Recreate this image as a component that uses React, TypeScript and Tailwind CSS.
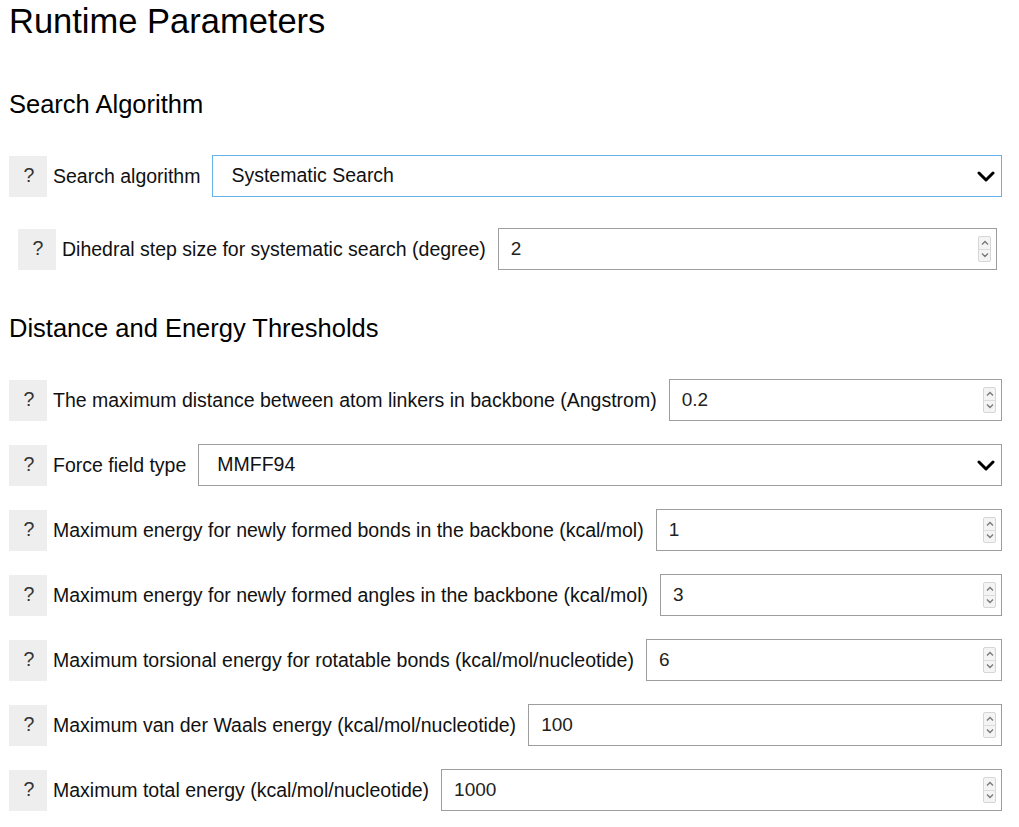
import React from "react";

const font = { fontFamily: '"Liberation Sans", Arial, sans-serif' };

function Help() {
  return (
    <div className="flex h-[41px] w-[38px] shrink-0 items-center justify-center bg-[#eeeeee] pl-[2px] text-[19.5px] text-[#333]">
      ?
    </div>
  );
}

function Chevron() {
  return (
    <svg width="18" height="11" viewBox="0 0 18 11" className="shrink-0">
      <path d="M2 2 L9 9 L16 2" fill="none" stroke="#000" strokeWidth="3" strokeLinecap="round" strokeLinejoin="round" />
    </svg>
  );
}

function Spinner() {
  return (
    <div className="flex h-[26px] w-[13px] shrink-0 flex-col rounded-[2px] border border-[#d6d6d6] bg-[#f4f4f4]">
      <div className="flex flex-1 items-center justify-center border-b border-[#dcdcdc]">
        <svg width="8" height="6" viewBox="0 0 8 6">
          <path d="M1 4.5 L4 1.5 L7 4.5" fill="none" stroke="#7a7a7a" strokeWidth="1.4" />
        </svg>
      </div>
      <div className="flex flex-1 items-center justify-center">
        <svg width="8" height="6" viewBox="0 0 8 6">
          <path d="M1 1.5 L4 4.5 L7 1.5" fill="none" stroke="#7a7a7a" strokeWidth="1.4" />
        </svg>
      </div>
    </div>
  );
}

function NumberRow({ label, value }: { label: string; value: string }) {
  return (
    <div className="flex h-[42px] items-center">
      <Help />
      <div className="ml-[6px] mr-[12px] whitespace-nowrap text-[19.5px] leading-[22px] text-[#111]">{label}</div>
      <div className="flex h-[42px] flex-1 items-center border border-[#9d9d9d] bg-white pl-[12px] pr-[5px]">
        <span className="flex-1 text-[19px] text-[#222]">{value}</span>
        <Spinner />
      </div>
    </div>
  );
}

function SelectRow({ label, value, focused }: { label: string; value: string; focused?: boolean }) {
  return (
    <div className="flex h-[42px] items-center">
      <Help />
      <div className="ml-[6px] mr-[12px] whitespace-nowrap text-[19.5px] leading-[22px] text-[#111]">{label}</div>
      <div
        className={
          focused
            ? "flex h-[42px] flex-1 items-center border border-[#68b2ea] bg-white pl-[18px] pr-[6px]"
            : "flex h-[42px] flex-1 items-center border border-[#9d9d9d] bg-white pl-[18px] pr-[6px]"
        }
      >
        <span className="flex-1 text-[19.5px] text-[#111]">{value}</span>
        <Chevron />
      </div>
    </div>
  );
}

export default function App() {
  return (
    <div className="bg-white pl-[9px] pr-[17px] pb-[20px] text-black" style={font}>
      <h1 className="pt-[1px] text-[34.5px] leading-[40px]">Runtime Parameters</h1>
      <h2 className="mt-[48px] text-[25.5px] leading-[30px]">Search Algorithm</h2>
      <div className="mt-[36px]">
        <SelectRow label="Search algorithm" value="Systematic Search" focused />
      </div>
      <div className="mt-[31px] pl-[9px] pr-[5px]">
        <NumberRow label="Dihedral step size for systematic search (degree)" value="2" />
      </div>
      <h2 className="mt-[43px] text-[25.5px] leading-[30px]">Distance and Energy Thresholds</h2>
      <div className="mt-[36px] flex flex-col gap-[23px]">
        <NumberRow label="The maximum distance between atom linkers in backbone (Angstrom)" value="0.2" />
        <SelectRow label="Force field type" value="MMFF94" />
        <NumberRow label="Maximum energy for newly formed bonds in the backbone (kcal/mol)" value="1" />
        <NumberRow label="Maximum energy for newly formed angles in the backbone (kcal/mol)" value="3" />
        <NumberRow label="Maximum torsional energy for rotatable bonds (kcal/mol/nucleotide)" value="6" />
        <NumberRow label="Maximum van der Waals energy (kcal/mol/nucleotide)" value="100" />
        <NumberRow label="Maximum total energy (kcal/mol/nucleotide)" value="1000" />
      </div>
    </div>
  );
}
